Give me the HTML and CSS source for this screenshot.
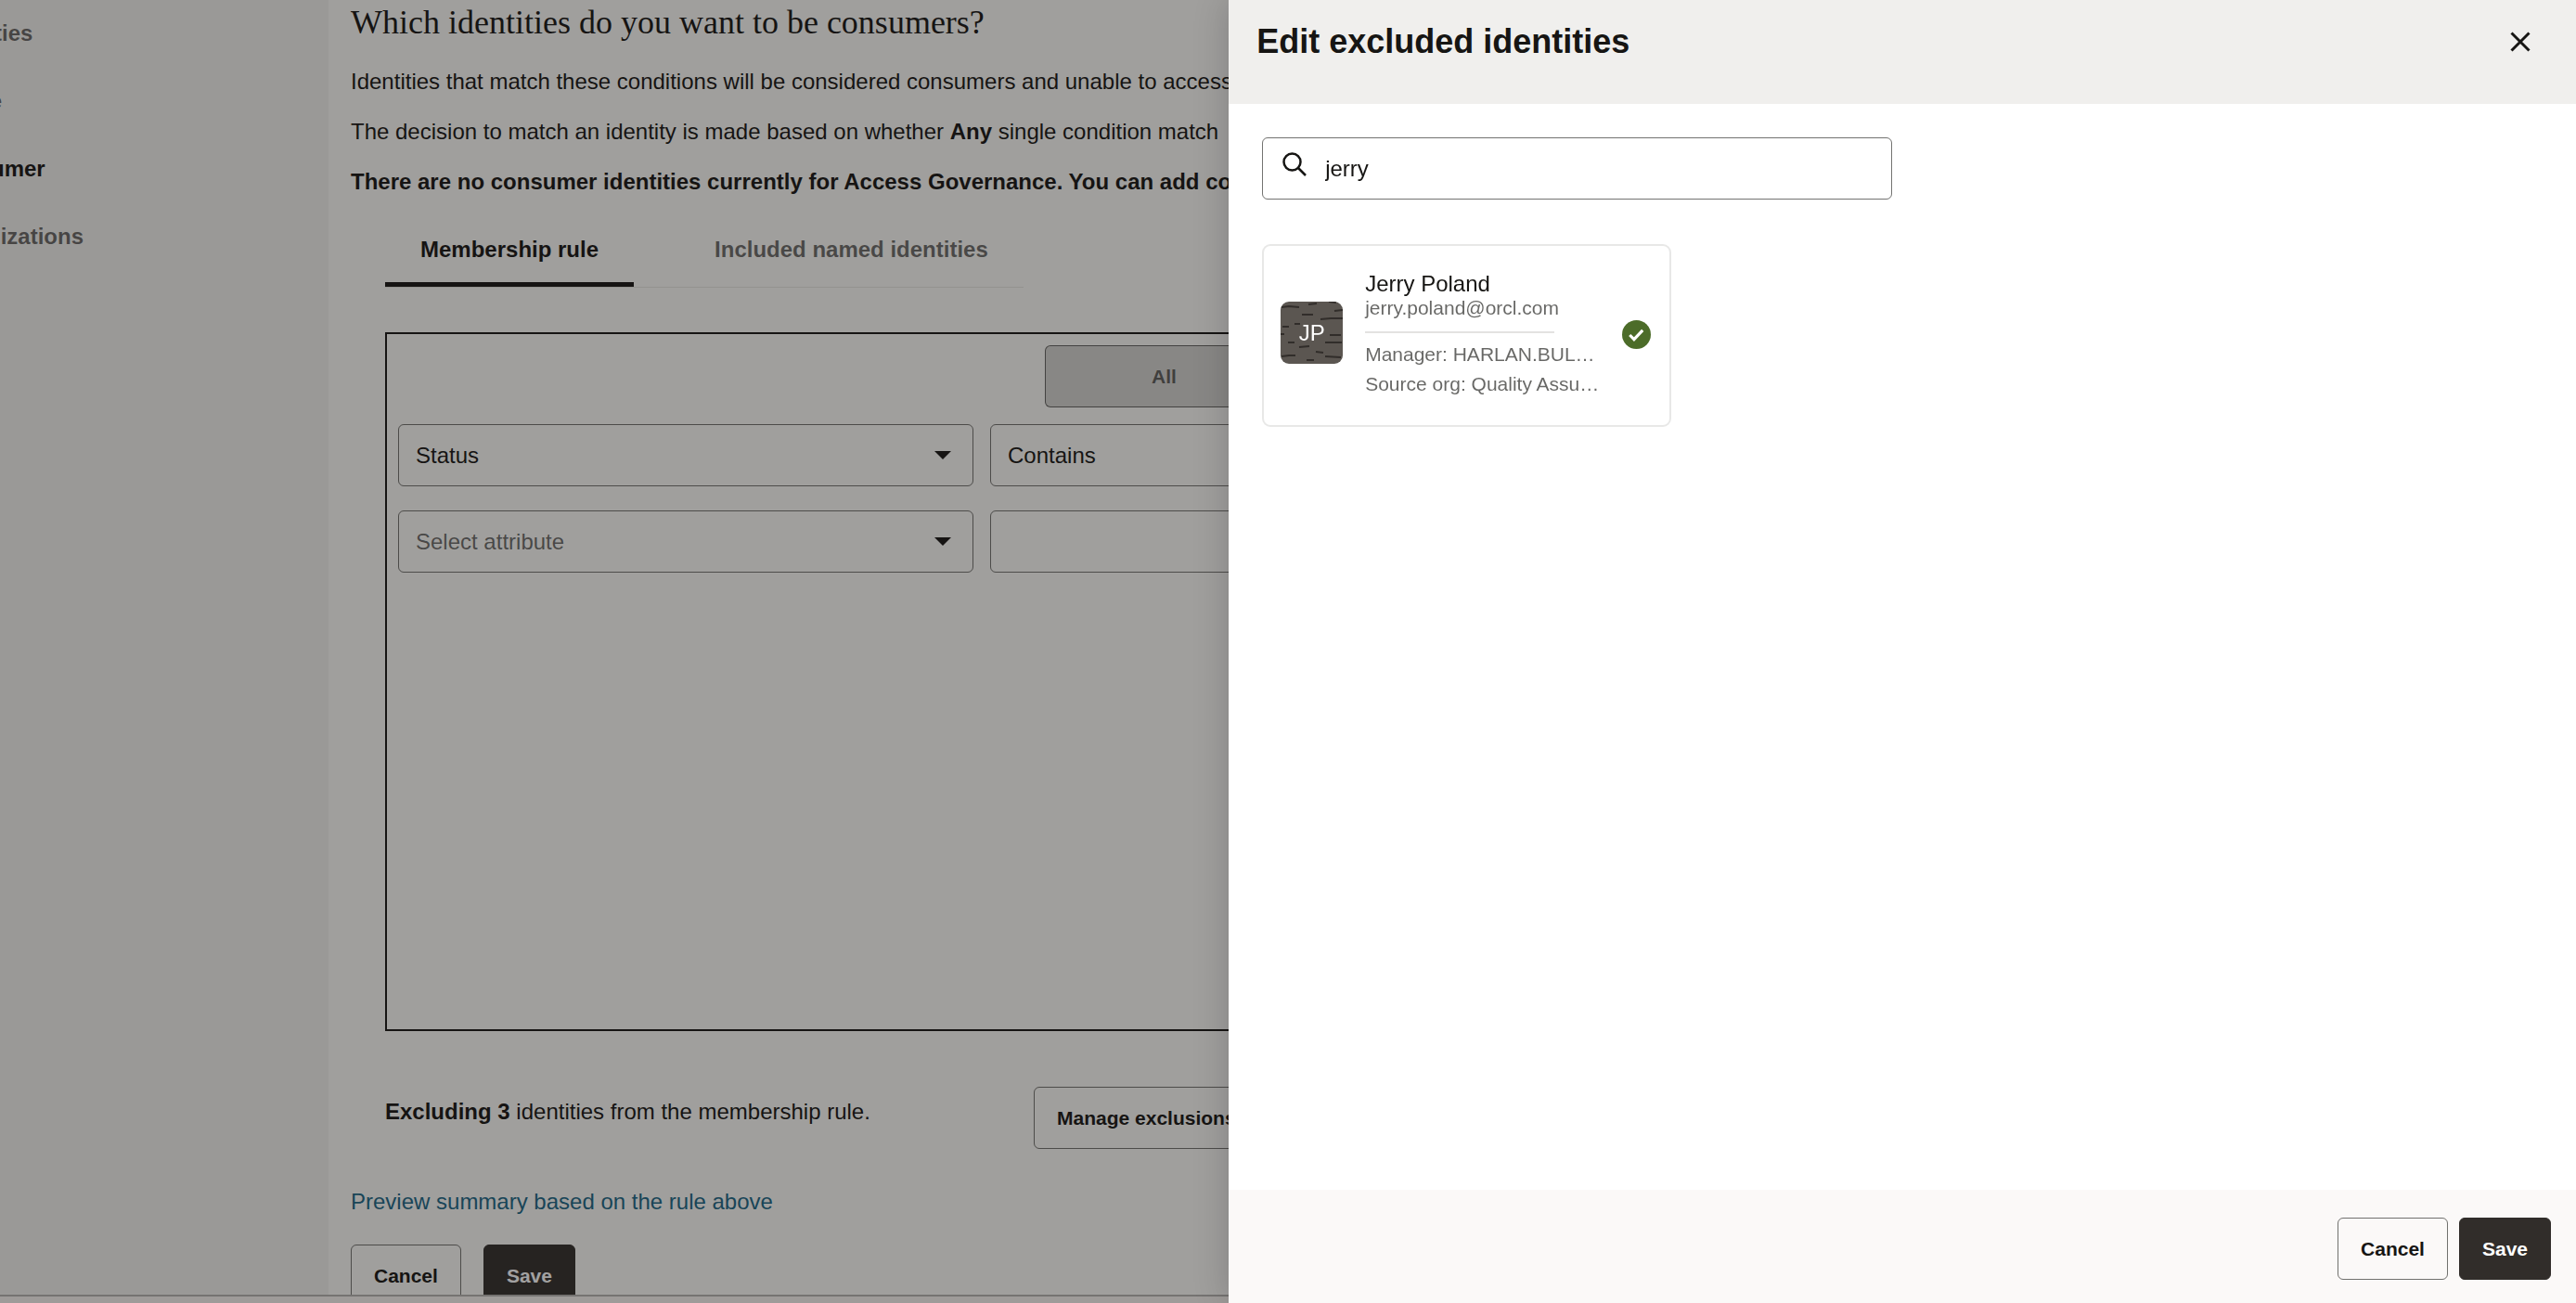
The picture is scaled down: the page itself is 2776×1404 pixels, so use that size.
FILE: index.html
```html
<!DOCTYPE html>
<html lang="en">
<head>
<meta charset="utf-8">
<meta name="viewport" content="width=device-width, initial-scale=1">
<title>Consumer identities - Access Governance</title>
<link rel="stylesheet" href="styles.css">
</head>
<body>
<div class="app">
  <nav class="sidebar" aria-label="Identity settings">
    <ul class="nav-list">
      <li><a class="nav-link" href="#">Identities</a></li>
      <li><a class="nav-link" href="#">Active</a></li>
      <li><a class="nav-link current" href="#" aria-current="page">Consumer</a></li>
      <li><a class="nav-link" href="#">Organizations</a></li>
    </ul>
  </nav>
  <main class="content">
    <h1 class="page-title">Which identities do you want to be consumers?</h1>
    <p class="intro">Identities that match these conditions will be considered consumers and unable to access</p>
    <p class="intro">The decision to match an identity is made based on whether <strong>Any</strong> single condition match</p>
    <p class="intro"><strong>There are no consumer identities currently for Access Governance. You can add co</strong></p>

    <div class="section">
      <div class="tabs" role="tablist">
        <button class="tab selected" role="tab" aria-selected="true">Membership rule</button>
        <button class="tab" role="tab" aria-selected="false">Included named identities</button>
      </div>
      <div class="rule-box">
        <div class="toggle">
          <button class="toggle-item pressed">All</button>
          <button class="toggle-item" aria-label="Any"></button>
        </div>
        <div class="conditions">
          <div class="select-field">
            <select class="field" aria-label="Attribute"><option>Status</option></select>
            <svg class="arrow" viewBox="0 0 18 9" aria-hidden="true"><path d="M0 0h18L9 9z"/></svg>
          </div>
          <div class="select-field">
            <select class="field" aria-label="Operator"><option>Contains</option></select>
          </div>
          <input class="field" type="text" aria-label="Value">
          <div class="select-field">
            <select class="field placeholder" aria-label="New attribute"><option>Select attribute</option></select>
            <svg class="arrow" viewBox="0 0 18 9" aria-hidden="true"><path d="M0 0h18L9 9z"/></svg>
          </div>
          <div class="select-field">
            <select class="field" aria-label="New operator"><option></option></select>
          </div>
          <input class="field" type="text" aria-label="New value">
        </div>
      </div>
      <div class="exclusions">
        <p class="exclusions-text"><strong>Excluding 3</strong> identities from the membership rule.</p>
        <button class="button">Manage exclusions</button>
      </div>
    </div>

    <a class="preview-link" href="#">Preview summary based on the rule above</a>
    <div class="page-actions">
      <button class="button">Cancel</button>
      <button class="button primary">Save</button>
    </div>
  </main>
  <footer class="page-footer"></footer>
</div>

<div class="scrim"></div>

<aside class="drawer" role="dialog" aria-labelledby="drawer-title">
  <header class="drawer-header">
    <h2 class="drawer-title" id="drawer-title">Edit excluded identities</h2>
    <button class="close" aria-label="Close">
      <svg class="close-icon" viewBox="0 0 22 22" aria-hidden="true"><path d="M1.5 1.5l19 19M20.500 1.500l-19 19"/></svg>
    </button>
  </header>
  <div class="drawer-body">
    <div class="search">
      <svg class="search-icon" viewBox="0 0 26 26" aria-hidden="true"><circle cx="10.500" cy="10.500" r="9"/><path d="M17 17l8 8"/></svg>
      <input class="search-input" type="text" aria-label="Search identities" value="jerry">
    </div>
    <article class="card">
      <div class="avatar">
        <svg class="avatar-pattern" viewBox="0 0 67 67" aria-hidden="true">
          <path d="M1 6l8-1 11 1M30 3l9-1M52 0l8 1M23 14h12M58 10l9-1M43 19l11-1h13M2 27h7M15 24h6M0 35h4M53 36h12M8 44h7M48 44h18M20 49l11-1M38 54l8 1M1 59l8-1 7 0M48 59l17 1M28 63l8 0"/>
        </svg>
        <span class="initials">JP</span>
      </div>
      <div class="identity">
        <h3 class="name">Jerry Poland</h3>
        <p class="email">jerry.poland@orcl.com</p>
        <hr class="divider">
        <p class="detail">Manager: HARLAN.BUL…</p>
        <p class="detail">Source org: Quality Assu…</p>
      </div>
      <svg class="check" viewBox="0 0 30 30" role="img" aria-label="Selected"><circle cx="15" cy="15" r="15"/><path d="M8 15.500l4.500 4.500L21.500 10.500"/></svg>
    </article>
  </div>
  <footer class="drawer-footer">
    <button class="button">Cancel</button>
    <button class="button primary">Save</button>
  </footer>
</aside>
</body>
</html>
```

FILE: styles.css
```css
:root {
  --ink: #161513;
  --ink-soft: rgba(22, 21, 19, .65);
  --line: rgba(22, 21, 19, .6);
}

* {
  box-sizing: border-box;
}

body {
  margin: 0;
  overflow: hidden;
  color: var(--ink);
  background: #fcfcf9;
  font: 24px/36px "Liberation Sans", Arial, sans-serif;
}

h1, h2, h3, p, ul {
  margin: 0;
  padding: 0;
}

button, input, select {
  font: inherit;
  color: inherit;
}

/* Page behind the drawer */
.app {
  display: grid;
  grid-template-columns: 354px 1fr;
  grid-template-rows: minmax(0, 1fr) auto;
  height: 100vh;
}

.sidebar {
  overflow: hidden;
  background: #f2f2ef;
}

.nav-list {
  display: grid;
  gap: 37px;
  margin-left: -70px;
  padding-top: 18px;
  list-style: none;
}

.nav-link {
  color: var(--ink-soft);
  font-weight: bold;
  text-decoration: none;
}

.nav-link.current {
  color: var(--ink);
}

.content {
  overflow: hidden;
  padding: 2px 24px 0;
}

.page-title {
  margin-bottom: 24px;
  font: 36px/44px "Liberation Serif", Georgia, serif;
}

.intro {
  margin-bottom: 18px;
  white-space: nowrap;
}

.section {
  margin: 24px 389px 0 37px;
}

.tabs {
  display: inline-flex;
  gap: 49px;
  border-bottom: 1px solid #e6e6e2;
}

.tab {
  padding: 13px 38px 17px;
  border: 0;
  border-bottom: 5px solid transparent;
  background: none;
  color: var(--ink-soft);
  font-weight: bold;
}

.tab.selected {
  border-color: var(--ink);
  color: var(--ink);
}

.rule-box {
  min-height: 753px;
  margin-top: 48px;
  padding: 12px 24px 12px 12px;
  border: 2px solid #161513;
}

.toggle {
  display: flex;
  justify-content: center;
}

.toggle-item {
  width: 257px;
  height: 67px;
  border: 1px solid var(--line);
  border-radius: 6px;
  background: none;
  font-size: 21px;
  font-weight: bold;
}

.toggle-item.pressed {
  background: #d4d4d1;
  color: var(--ink-soft);
}

.conditions {
  display: grid;
  grid-template-columns: repeat(3, 1fr);
  gap: 26px 18px;
  margin: 18px 12px 0 0;
}

.select-field {
  display: grid;
  align-items: center;
}

.select-field > * {
  grid-area: 1 / 1;
}

.field {
  width: 100%;
  height: 67px;
  padding: 0 18px;
  appearance: none;
  border: 1px solid var(--line);
  border-radius: 6px;
  background: transparent;
}

.field.placeholder {
  color: var(--ink-soft);
}

.arrow {
  justify-self: end;
  width: 18px;
  height: 9px;
  margin-right: 24px;
  fill: var(--ink);
}

.exclusions {
  display: grid;
  grid-template-columns: 699px auto;
  justify-content: start;
  margin-top: 60px;
}

.exclusions-text {
  padding-top: 9px;
}

.button {
  height: 67px;
  padding: 0 24px;
  border: 1px solid var(--line);
  border-radius: 6px;
  background: transparent;
  font-size: 21px;
  font-weight: bold;
}

.button.primary {
  border-color: #312d2a;
  background: #312d2a;
  color: #fff;
}

.preview-link {
  display: block;
  width: fit-content;
  margin-top: 39px;
  color: #1a6685;
  text-decoration: none;
}

.page-actions {
  display: flex;
  gap: 24px;
  margin-top: 28px;
}

.page-footer {
  grid-column: 1 / -1;
  height: 9px;
  border-top: 2px solid #b4b3b0;
  background: #f9f5f2;
}

.scrim {
  position: fixed;
  inset: 0;
  background: rgba(22, 21, 19, .4);
}

/* Drawer */
.drawer {
  position: fixed;
  inset: 0 0 0 auto;
  display: flex;
  flex-direction: column;
  width: 52.3%;
  background: #fff;
  box-shadow: 0 0 36px rgba(0, 0, 0, .2);
}

.drawer-header {
  display: flex;
  justify-content: space-between;
  align-items: center;
  padding: 23px 38px 45px 30px;
  background: #f0efed;
}

.drawer-title {
  font-size: 36px;
  line-height: 44px;
}

.close {
  display: grid;
  place-items: center;
  width: 44px;
  height: 44px;
  padding: 0;
  border: 0;
  background: none;
}

.close-icon {
  width: 22px;
  height: 22px;
  fill: none;
  stroke: var(--ink);
  stroke-width: 3;
}

.drawer-body {
  flex: 1;
  padding: 36px;
}

.search {
  display: flex;
  align-items: center;
  width: 49.2%;
  height: 67px;
  padding-left: 21px;
  border: 1px solid var(--line);
  border-radius: 6px;
}

.search-icon {
  width: 26px;
  height: 26px;
  margin-bottom: 10px;
  fill: none;
  stroke: var(--ink);
  stroke-width: 2.500;
}

.search-input {
  flex: 1;
  height: 100%;
  padding: 0 20px;
  border: 0;
  outline: 0;
  background: none;
}

.card {
  display: flex;
  align-items: center;
  width: 441px;
  height: 197px;
  margin-top: 48px;
  padding: 0 20px 2px 18px;
  border: 2px solid #e8e8e7;
  border-radius: 9px;
}

.avatar {
  display: grid;
  place-items: center;
  width: 67px;
  height: 67px;
  margin: 0 24px 4px 0;
  overflow: hidden;
  border-radius: 9px;
  background: #5b5651;
  color: #fff;
}

.avatar > * {
  grid-area: 1 / 1;
}

.avatar-pattern {
  width: 67px;
  height: 67px;
  fill: none;
  stroke: #312d2a;
  stroke-width: 2;
}

.identity {
  flex: 1;
}

.name {
  font-size: 24px;
  font-weight: normal;
  line-height: 28px;
}

.email, .detail {
  color: var(--ink-soft);
  font-size: 21px;
  line-height: 24px;
}

.divider {
  width: 204px;
  height: 2px;
  margin: 13px 0 7px;
  border: 0;
  background: #e3e2e1;
}

.detail {
  line-height: 32px;
}

.check {
  width: 31px;
  height: 31px;
}

.check circle {
  fill: #4c6c29;
}

.check path {
  fill: none;
  stroke: #fff;
  stroke-width: 3;
}

.drawer-footer {
  display: flex;
  justify-content: flex-end;
  gap: 12px;
  padding: 30px 27px 25px;
  background: #fbf9f8;
}
```
